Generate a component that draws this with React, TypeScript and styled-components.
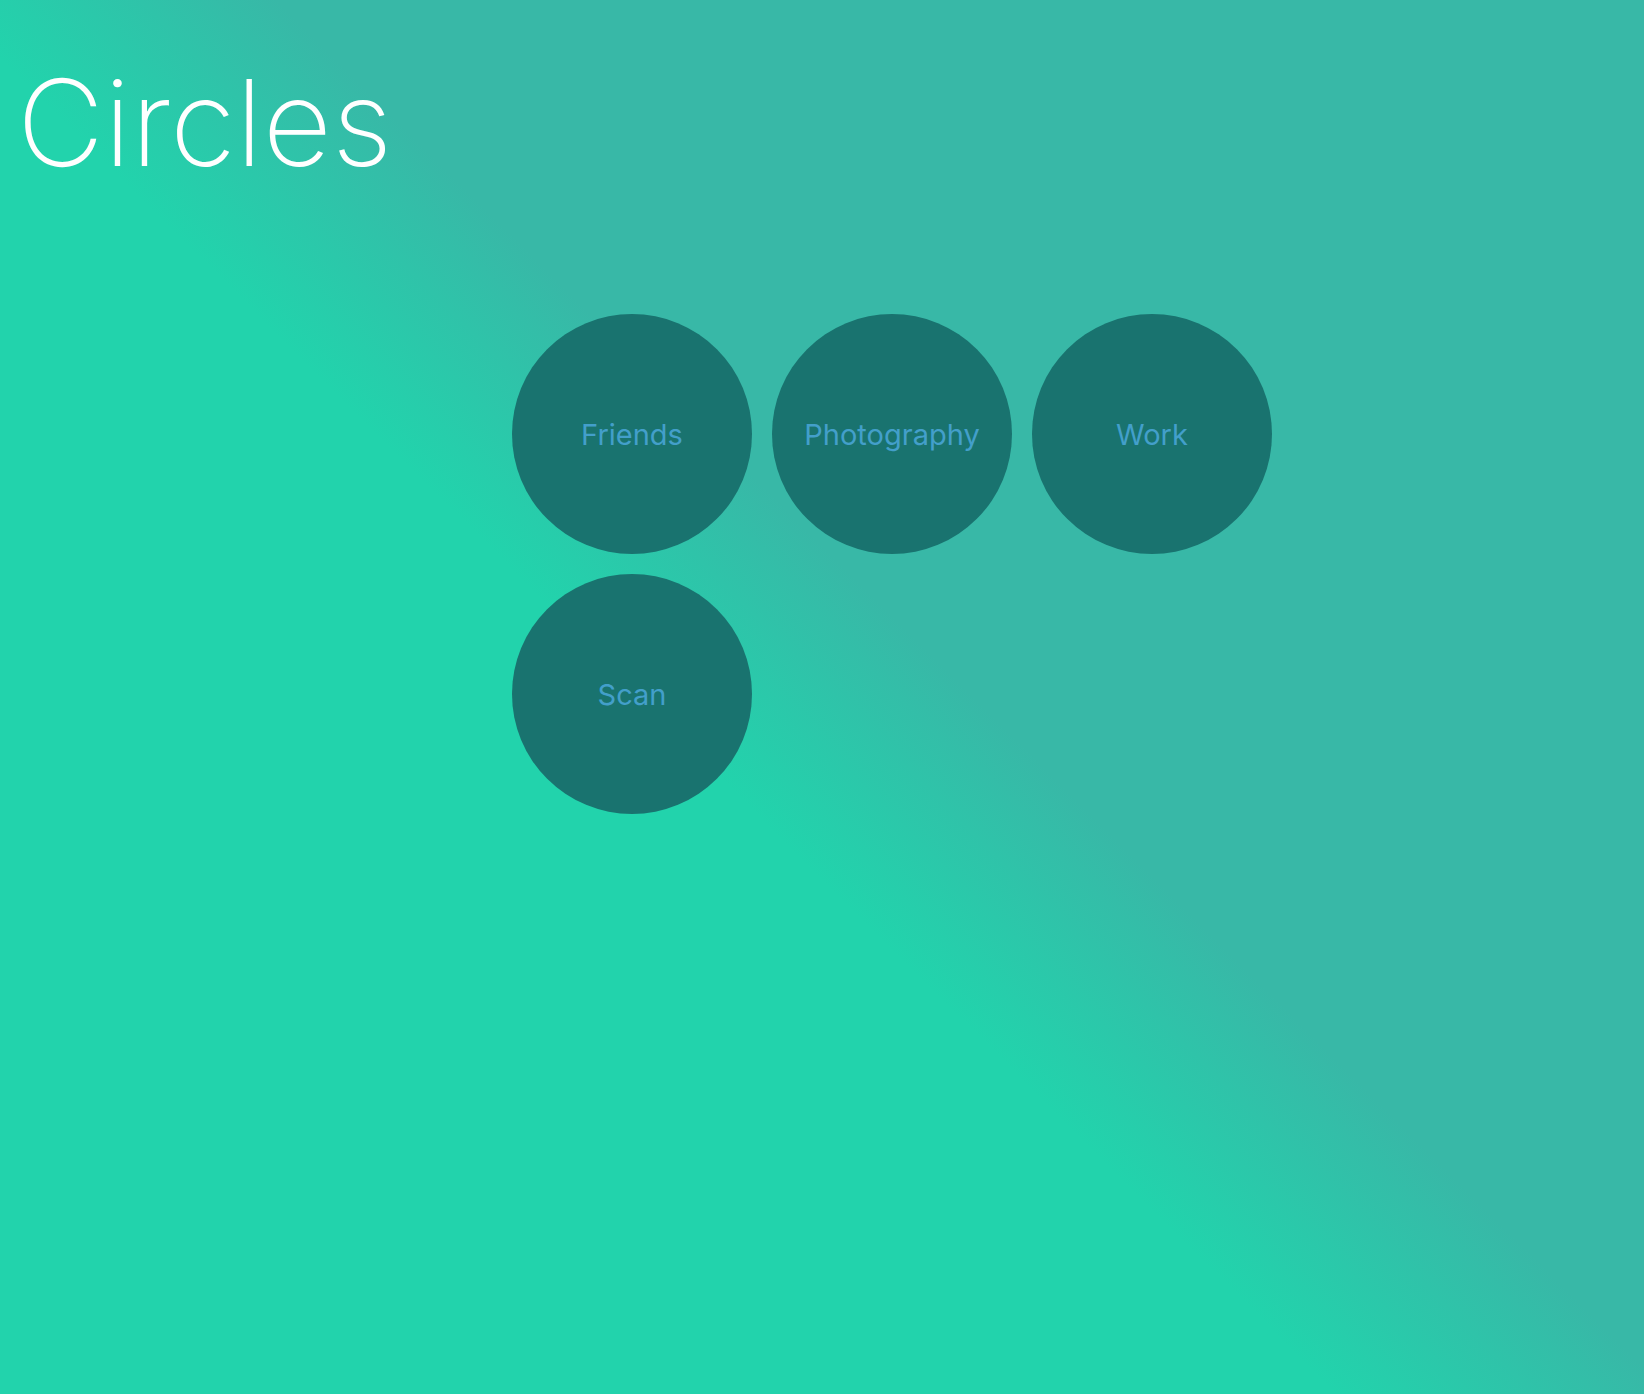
import React from "react";
import styled, { createGlobalStyle } from "styled-components";

const Global = createGlobalStyle`
  html, body { margin: 0; padding: 0; }
  body { font-family: Roboto, "Liberation Sans", sans-serif; }
  #root { min-height: 100vh; }
`;

const Page = styled.div`
  width: 1644px;
  height: 1394px;
  box-sizing: border-box;
  padding: 53px 0 0 17px;
  background: linear-gradient(45deg, #22d3ac 0%, #22d3ac 44%, #38b8a7 55%, #38b8a7 100%);
  display: flex;
  flex-direction: column;
  overflow: hidden;
`;

const Title = styled.h1`
  margin: 0;
  font-family: Inter, Roboto, "Liberation Sans", sans-serif;
  font-weight: 200;
  font-size: 120px;
  line-height: 140px;
  color: #ffffff;
  letter-spacing: 0;
`;

const Grid = styled.div`
  display: grid;
  grid-template-columns: repeat(3, 240px);
  gap: 20px;
  margin: 121px 0 0 495px;
`;

const Circle = styled.button`
  width: 240px;
  height: 240px;
  border-radius: 50%;
  border: none;
  padding: 0;
  background: #19736f;
  color: #439fca;
  font-family: Inter, Roboto, sans-serif;
  font-size: 29px;
  font-weight: 400;
  display: flex;
  align-items: center;
  justify-content: center;
  cursor: pointer;
`;

const circles = ["Friends", "Photography", "Work", "Scan"];

export default function App() {
  return (
    <>
      <Global />
      <Page>
        <Title>Circles</Title>
        <Grid>
          {circles.map((c) => (
            <Circle key={c}>{c}</Circle>
          ))}
        </Grid>
      </Page>
    </>
  );
}
